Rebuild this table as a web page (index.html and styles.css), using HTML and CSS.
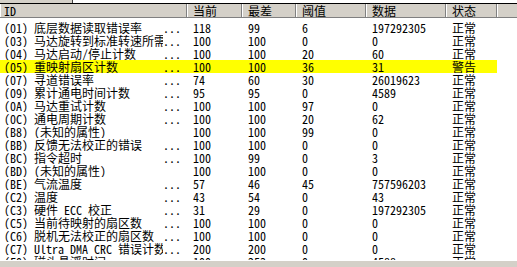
FILE: index.html
```html
<!DOCTYPE html>
<html lang="zh-CN">
<head>
<meta charset="utf-8">
<link rel="stylesheet" href="styles.css">
</head>
<body>
<div class="topstrip"><div class="ts-left"></div><div class="ts-right"></div></div>
<div class="list">
  <div class="row head">
    <div class="c id">ID</div><div class="c">当前</div><div class="c">最差</div><div class="c">阈值</div><div class="c">数据</div><div class="c">状态</div><div class="c fill"></div>
  </div>
  <div class="body">
    <div class="row"><div class="c id"><span class="nm">(01) 底层数据读取错误率</span><span class="dots">...</span></div><div class="c">118</div><div class="c">99</div><div class="c">6</div><div class="c">197292305</div><div class="c">正常</div><div class="c fill"></div></div>
    <div class="row"><div class="c id"><span class="nm">(03) 马达旋转到标准转速所需时间</span><span class="dots">...</span></div><div class="c">100</div><div class="c">100</div><div class="c">0</div><div class="c">0</div><div class="c">正常</div><div class="c fill"></div></div>
    <div class="row"><div class="c id"><span class="nm">(04) 马达启动/停止计数</span><span class="dots">...</span></div><div class="c">100</div><div class="c">100</div><div class="c">20</div><div class="c">60</div><div class="c">正常</div><div class="c fill"></div></div>
    <div class="row warn"><div class="c id"><span class="nm">(05) 重映射扇区计数</span><span class="dots">...</span></div><div class="c">100</div><div class="c">100</div><div class="c">36</div><div class="c">31</div><div class="c">警告</div><div class="c fill"></div></div>
    <div class="row"><div class="c id"><span class="nm">(07) 寻道错误率</span><span class="dots">...</span></div><div class="c">74</div><div class="c">60</div><div class="c">30</div><div class="c">26019623</div><div class="c">正常</div><div class="c fill"></div></div>
    <div class="row"><div class="c id"><span class="nm">(09) 累计通电时间计数</span><span class="dots">...</span></div><div class="c">95</div><div class="c">95</div><div class="c">0</div><div class="c">4589</div><div class="c">正常</div><div class="c fill"></div></div>
    <div class="row"><div class="c id"><span class="nm">(0A) 马达重试计数</span><span class="dots">...</span></div><div class="c">100</div><div class="c">100</div><div class="c">97</div><div class="c">0</div><div class="c">正常</div><div class="c fill"></div></div>
    <div class="row"><div class="c id"><span class="nm">(0C) 通电周期计数</span><span class="dots">...</span></div><div class="c">100</div><div class="c">100</div><div class="c">20</div><div class="c">62</div><div class="c">正常</div><div class="c fill"></div></div>
    <div class="row"><div class="c id"><span class="nm">(B8) (未知的属性)</span></div><div class="c">100</div><div class="c">100</div><div class="c">99</div><div class="c">0</div><div class="c">正常</div><div class="c fill"></div></div>
    <div class="row"><div class="c id"><span class="nm">(BB) 反馈无法校正的错误</span><span class="dots">...</span></div><div class="c">100</div><div class="c">100</div><div class="c">0</div><div class="c">0</div><div class="c">正常</div><div class="c fill"></div></div>
    <div class="row"><div class="c id"><span class="nm">(BC) 指令超时</span><span class="dots">...</span></div><div class="c">100</div><div class="c">99</div><div class="c">0</div><div class="c">3</div><div class="c">正常</div><div class="c fill"></div></div>
    <div class="row"><div class="c id"><span class="nm">(BD) (未知的属性)</span></div><div class="c">100</div><div class="c">100</div><div class="c">0</div><div class="c">0</div><div class="c">正常</div><div class="c fill"></div></div>
    <div class="row"><div class="c id"><span class="nm">(BE) 气流温度</span><span class="dots">...</span></div><div class="c">57</div><div class="c">46</div><div class="c">45</div><div class="c">757596203</div><div class="c">正常</div><div class="c fill"></div></div>
    <div class="row"><div class="c id"><span class="nm">(C2) 温度</span><span class="dots">...</span></div><div class="c">43</div><div class="c">54</div><div class="c">0</div><div class="c">43</div><div class="c">正常</div><div class="c fill"></div></div>
    <div class="row"><div class="c id"><span class="nm">(C3) 硬件 ECC 校正</span><span class="dots">...</span></div><div class="c">31</div><div class="c">29</div><div class="c">0</div><div class="c">197292305</div><div class="c">正常</div><div class="c fill"></div></div>
    <div class="row"><div class="c id"><span class="nm">(C5) 当前待映射的扇区数</span><span class="dots">...</span></div><div class="c">100</div><div class="c">100</div><div class="c">0</div><div class="c">0</div><div class="c">正常</div><div class="c fill"></div></div>
    <div class="row"><div class="c id"><span class="nm">(C6) 脱机无法校正的扇区数</span><span class="dots">...</span></div><div class="c">100</div><div class="c">100</div><div class="c">0</div><div class="c">0</div><div class="c">正常</div><div class="c fill"></div></div>
    <div class="row"><div class="c id"><span class="nm">(C7) Ultra DMA CRC 错误计数</span><span class="dots">...</span></div><div class="c">200</div><div class="c">200</div><div class="c">0</div><div class="c">0</div><div class="c">正常</div><div class="c fill"></div></div>
    <div class="row"><div class="c id"><span class="nm">(F0) 磁头悬浮时间</span><span class="dots">...</span></div><div class="c">100</div><div class="c">253</div><div class="c">0</div><div class="c">4588</div><div class="c">正常</div><div class="c fill"></div></div>
  </div>
  <div class="hscroll"></div>
</div>
</body>
</html>
```
FILE: styles.css
```css
html, body {
  margin: 0;
  padding: 0;
  background: #fff;
  width: 517px;
  height: 267px;
  overflow: hidden;
}
body {
  font-family: "Noto Sans Mono CJK SC", "Liberation Mono", "Noto Sans CJK SC", monospace;
  font-size: 12px;
  color: #000;
  display: flex;
  flex-direction: column;
}
.topstrip {
  height: 3px;
  display: flex;
  border-bottom: 1px solid #000;
}
.ts-left { width: 72px; background: #d4d0c8; border-right: 1px solid #404040; }
.ts-right { flex: 1; background: #fff; }
.list {
  flex: 1;
  display: flex;
  flex-direction: column;
  overflow: hidden;
  position: relative;
}
.row {
  display: grid;
  grid-template-columns: 187px 55px 54px 70px 80px 51px 1fr;
  height: 13px;
  line-height: 13px;
  white-space: nowrap;
}
.row.head {
  height: 13px;
  line-height: 13px;
  background: #d4d0c8;
  border-bottom: 1px solid #808080;
}
.row.head .c {
  border-right: 1px solid #808080;
  box-shadow: inset 1px 0 0 #fff;
}
.row.head .c.fill { border-right: none; }
.body {
  padding-top: 3px;
  flex: 1;
  overflow: hidden;
}
.c {
  padding-left: 6px;
}
.c.id {
  padding-left: 4px;
  padding-right: 6px;
  display: flex;
  overflow: hidden;
}
.nm {
  flex: 1;
  overflow: hidden;
}
.dots { flex: none; }
.row.warn { background: linear-gradient(to right, #ffff00 497px, #fff 497px); }
.hscroll {
  position: absolute;
  left: 0;
  right: 0;
  bottom: 0;
  height: 6px;
  background: #d4d0c8;
  border-top: 1px solid #fff;
}
```
